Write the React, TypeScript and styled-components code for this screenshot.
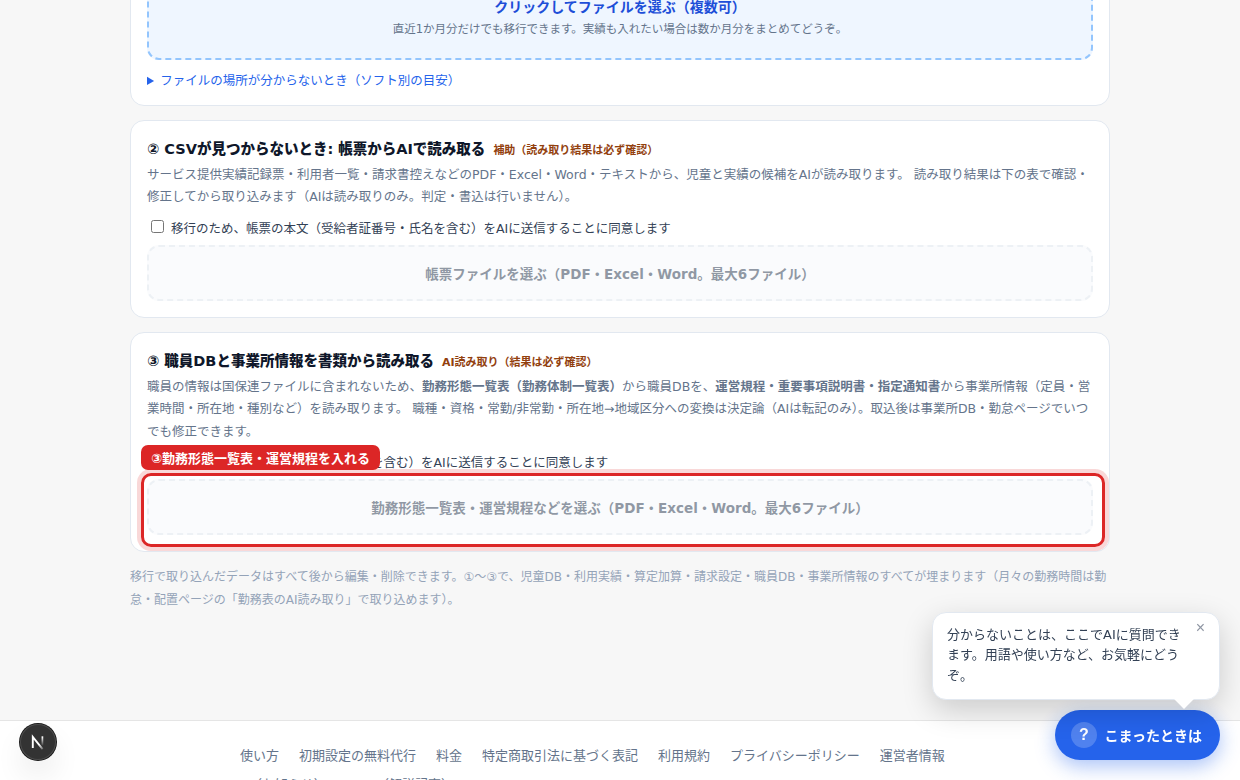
import React from "react";
import styled, { createGlobalStyle, css } from "styled-components";

const Global = createGlobalStyle`
  * { box-sizing: border-box; }
  html, body { margin: 0; height: 780px; overflow: hidden; }
  body {
    background: #f7f7f7;
    color: #0f172a;
    font-family: "DejaVu Sans", "Noto Sans CJK JP", sans-serif;
    font-size: 16px;
  }
`;

const Page = styled.div`
  height: 780px;
  overflow: hidden;
  display: flex;
  flex-direction: column;
`;

const Main = styled.main`
  width: 980px;
  height: 720px;
  flex: none;
  margin: 0 auto;
  display: flex;
  flex-direction: column;
  justify-content: flex-end;
  padding-bottom: 108px;
`;

const Card = styled.section`
  background: #fff;
  border: 1px solid #e2e8f0;
  border-radius: 14px;
  padding: 16px;
  margin-bottom: 14px;
  flex: none;
`;

const Heading = styled.h2`
  margin: 0 0 2px;
  padding-top: 1px;
  font-size: 14.5px;
  line-height: 22px;
  font-weight: 800;
  color: #0f172a;
`;

const Tag = styled.span`
  margin-left: 8px;
  font-size: 11px;
  font-weight: 700;
  color: #92400e;
`;

const Description = styled.p`
  margin: 0 0 9px;
  font-size: 12.5px;
  line-height: 22.5px;
  color: #64748b;
`;

const Consent = styled.label`
  display: flex;
  align-items: center;
  gap: 7px;
  margin-bottom: 8px;
  height: 19px;
  font-size: 12.5px;
  color: #334155;

  input { margin: 0 0 1px 4px; width: 13px; height: 13px; }
`;

const DropZone = styled.div<{ $active?: boolean }>`
  display: flex;
  flex-direction: column;
  align-items: center;
  justify-content: center;
  border-radius: 12px;
  border: 2px dashed #cbd5e1;
  font-weight: 700;
  ${(p) =>
    p.$active
      ? css`
          height: 118px;
          padding-top: 32px;
          border-color: #93c5fd;
          background: #eff6ff;
          color: #1d4ed8;
          font-size: 14px;
        `
      : css`
          height: 56px;
          border-color: #e2e8f0;
          background: #f8fafc;
          color: #475569;
          font-size: 13.5px;
          opacity: 0.6;
        `}
`;

const DropHint = styled.span`
  margin-top: 5px;
  font-size: 11.5px;
  line-height: 17px;
  font-weight: 400;
  color: #64748b;
`;

const Help = styled.details`
  margin: 11px 0 -1px;
  font-size: 12.5px;
  line-height: 19px;
  color: #2563eb;
`;

const Highlighted = styled.div`
  position: relative;
`;

const Ring = styled.div`
  position: absolute;
  inset: -6px -12px -12px -6px;
  border: 3px solid #dc2626;
  border-radius: 10px;
  box-shadow: 0 0 0 4px rgba(220, 38, 38, 0.18);
`;

const RingLabel = styled.div`
  position: absolute;
  left: -6px;
  top: -34px;
  height: 25px;
  padding: 0 10px;
  border-radius: 7px;
  background: #dc2626;
  color: #fff;
  font-size: 13px;
  line-height: 28px;
  font-weight: 700;
  white-space: nowrap;
`;

const Note = styled.p`
  margin: 0;
  font-size: 12px;
  line-height: 22.8px;
  color: #94a3b8;
`;

const Footer = styled.footer`
  flex: none;
  height: 140px;
  background: #fff;
  border-top: 1px solid #e5e5e5;
  padding: 25px 240px;
`;

const Links = styled.nav`
  display: flex;
  flex-wrap: wrap;
  gap: 9px 20px;
  font-size: 13px;
  line-height: 20px;
  color: #64748b;
`;

const DevBadge = styled.div`
  position: fixed;
  left: 20px;
  top: 724px;
  width: 36px;
  height: 36px;
  border-radius: 50%;
  background: #333;
  box-shadow: 0 0 0 1px #171717, inset 0 0 0 1px #4c4c4c, 0 16px 32px -8px rgba(0, 0, 0, 0.24);
  display: flex;
  align-items: center;
  justify-content: center;
`;

const Bubble = styled.aside`
  position: fixed;
  left: 932px;
  top: 612px;
  width: 288px;
  height: 88px;
  z-index: 2;
  padding: 12px 34px 12px 14px;
  border: 1px solid #e2e8f0;
  border-radius: 14px;
  background: #fff;
  box-shadow: 0 10px 30px rgba(0, 0, 0, 0.18);
  font-size: 13px;
  line-height: 20.4px;
  color: #334155;

  &::after {
    content: "";
    position: absolute;
    right: 28px;
    bottom: -7px;
    width: 14px;
    height: 14px;
    background: #fff;
    transform: rotate(45deg);
  }
`;

const Close = styled.button`
  position: absolute;
  right: 14px;
  top: 6px;
  padding: 0;
  border: 0;
  background: none;
  font-family: "Liberation Sans", Arial, sans-serif;
  font-size: 16px;
  line-height: 18px;
  color: #8f96a3;
`;

const HelpButton = styled.button`
  position: fixed;
  left: 1055px;
  top: 710px;
  width: 165px;
  height: 50px;
  border: 0;
  padding: 0 0 0 16px;
  border-radius: 25px;
  background: #2563eb;
  box-shadow: 0 6px 20px rgba(37, 99, 235, 0.4);
  display: flex;
  align-items: center;
  gap: 7.5px;
  color: #fff;
  font-family: "Liberation Sans", "Noto Sans CJK JP", sans-serif;
  font-size: 14px;
  font-weight: 700;
`;

const QuestionMark = styled.span`
  width: 26px;
  height: 26px;
  border-radius: 50%;
  background: rgba(255, 255, 255, 0.2);
  display: flex;
  align-items: center;
  justify-content: center;
  font-size: 16px;
`;

const links = [
  "使い方",
  "初期設定の無料代行",
  "料金",
  "特定商取引法に基づく表記",
  "利用規約",
  "プライバシーポリシー",
  "運営者情報",
  "X（お知らせ）",
  "note（解説記事）",
];

const NextMark = () => (
  <svg width="36" height="36" viewBox="0 0 36 36" fill="none">
    <defs>
      <linearGradient id="diag" x1="20" y1="20" x2="24.5" y2="26.5" gradientUnits="userSpaceOnUse">
        <stop stopColor="#fff" />
        <stop offset="1" stopColor="#fff" stopOpacity="0" />
      </linearGradient>
      <linearGradient id="stem" x1="23" y1="13" x2="23" y2="22" gradientUnits="userSpaceOnUse">
        <stop stopColor="#fff" />
        <stop offset="1" stopColor="#fff" stopOpacity="0" />
      </linearGradient>
    </defs>
    <path d="M12.8 24V13L22.6 25.2" stroke="url(#diag)" strokeWidth="1.9" />
    <path d="M22.4 12.3V21.5" stroke="url(#stem)" strokeWidth="1.7" />
  </svg>
);

export default function App() {
  return (
    <>
      <Global />
      <Page>
        <Main>
          <Card>
            <DropZone $active>
              クリックしてファイルを選ぶ（複数可）
              <DropHint>直近1か月分だけでも移行できます。実績も入れたい場合は数か月分をまとめてどうぞ。</DropHint>
            </DropZone>
            <Help>
              <summary>ファイルの場所が分からないとき（ソフト別の目安）</summary>
            </Help>
          </Card>

          <Card>
            <Heading>
              ② CSVが見つからないとき: 帳票からAIで読み取る
              <Tag>補助（読み取り結果は必ず確認）</Tag>
            </Heading>
            <Description>
              サービス提供実績記録票・利用者一覧・請求書控えなどのPDF・Excel・Word・テキストから、児童と実績の候補をAIが読み取ります。
              読み取り結果は下の表で確認・修正してから取り込みます（AIは読み取りのみ。判定・書込は行いません）。
            </Description>
            <Consent>
              <input type="checkbox" />
              移行のため、帳票の本文（受給者証番号・氏名を含む）をAIに送信することに同意します
            </Consent>
            <DropZone>帳票ファイルを選ぶ（PDF・Excel・Word。最大6ファイル）</DropZone>
          </Card>

          <Card>
            <Heading>
              ③ 職員DBと事業所情報を書類から読み取る
              <Tag>AI読み取り（結果は必ず確認）</Tag>
            </Heading>
            <Description>
              職員の情報は国保連ファイルに含まれないため、<b>勤務形態一覧表（勤務体制一覧表）</b>から職員DBを、
              <b>運営規程・重要事項説明書・指定通知書</b>から事業所情報（定員・営業時間・所在地・種別など）を読み取ります。
              職種・資格・常勤/非常勤・所在地→地域区分への変換は決定論（AIは転記のみ）。取込後は事業所DB・勤怠ページでいつでも修正できます。
            </Description>
            <Consent>
              <input type="checkbox" />
              移行のため、書類の本文（職員氏名を含む）をAIに送信することに同意します
            </Consent>
            <Highlighted>
              <DropZone>勤務形態一覧表・運営規程などを選ぶ（PDF・Excel・Word。最大6ファイル）</DropZone>
              <Ring />
              <RingLabel>③勤務形態一覧表・運営規程を入れる</RingLabel>
            </Highlighted>
          </Card>

          <Note>
            移行で取り込んだデータはすべて後から編集・削除できます。①〜③で、児童DB・利用実績・算定加算・請求設定・職員DB・事業所情報のすべてが埋まります（月々の勤務時間は勤怠・配置ページの「勤務表のAI読み取り」で取り込めます）。
          </Note>
        </Main>

        <Footer>
          <Links>
            {links.map((l) => (
              <span key={l}>{l}</span>
            ))}
          </Links>
        </Footer>
      </Page>

      <DevBadge>
        <NextMark />
      </DevBadge>
      <HelpButton>
        <QuestionMark>?</QuestionMark>
        こまったときは
      </HelpButton>
      <Bubble>
        分からないことは、ここでAIに質問できます。用語や使い方など、お気軽にどうぞ。
        <Close>×</Close>
      </Bubble>
    </>
  );
}
